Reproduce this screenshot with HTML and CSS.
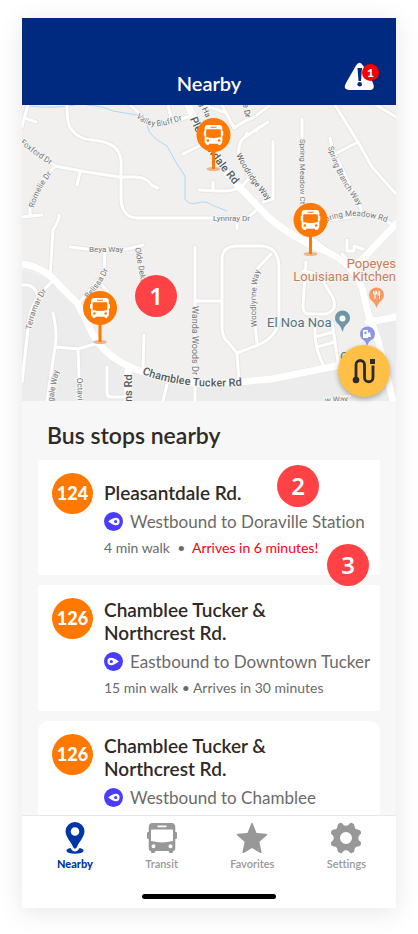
FILE: index.html
```html
<!DOCTYPE html>
<html lang="en">
<head>
<meta charset="utf-8">
<meta name="viewport" content="width=device-width, initial-scale=1">
<title>Nearby</title>
<link rel="stylesheet" href="styles.css">
</head>
<body>
<svg class="defs" aria-hidden="true">
  <symbol id="bus" viewBox="0 0 30 30">
    <path fill-rule="evenodd" d="M5 0H25Q28 .3 28.3 4V9H29Q30 9 30 10V15Q30 16 28.8 16H28.3V25Q28.3 28 26 28V29Q26 30 25 30H23Q22 30 21.500 28H8.500Q8 30 7 30H5Q4 30 4 29V28Q1.700 28 1.700 25V16H1.200Q0 16 0 15V10Q0 9 1 9H1.700V4Q2 .3 5 0ZM10.500 2.600V4.200H19.500V2.600ZM4 7.500V18Q15 20.800 26 18V7.500Q26 6.500 25 6.500H5Q4 6.500 4 7.500ZM6.500 21.200A2 2 0 1 0 6.500 25.200A2 2 0 1 0 6.500 21.200ZM23.500 21.200A2 2 0 1 0 23.500 25.200A2 2 0 1 0 23.500 21.200Z"/>
  </symbol>
  <symbol id="heading" viewBox="0 0 20 20">
    <circle cx="10" cy="10" r="10" fill="#4a3cff"/>
    <path fill="#fff" fill-rule="evenodd" d="M4.300 10Q9.500 6 12.500 6.100A3.900 3.900 0 0 1 12.500 13.900Q9.500 14 4.300 10ZM12.300 8.300A1.700 1.700 0 1 0 12.300 11.700A1.700 1.700 0 1 0 12.300 8.300Z"/>
  </symbol>
  <symbol id="pin" viewBox="0 0 36 54">
    <ellipse cx="18" cy="51" rx="7" ry="2" fill="#eab68c"/>
    <path d="M18 32V51" stroke="#ff7900" stroke-width="3"/>
    <circle cx="18" cy="17" r="17" fill="#ff7900"/>
    <use href="#bus" x="8" y="7" width="20" height="20" fill="#fff"/>
  </symbol>
</svg>

<div class="phone">
  <header class="topbar">
    <h1>Nearby</h1>
    <button class="alerts" aria-label="Alerts">
      <svg viewBox="0 0 31 30" aria-hidden="true">
        <path d="M12 4.500Q15.500-1 19 4.500L29 22Q31.500 28.500 26 29H5Q-1.500 28.500 2 22Z" fill="#fff"/>
        <path d="M13.500 7H18L17 20H14.500Z" fill="#002a7f"/><circle cx="15.700" cy="23.300" r="2.300" fill="#002a7f"/>
      </svg>
      <span class="badge">1</span>
    </button>
  </header>

  <section class="map" aria-label="Map">
    <svg class="canvas" viewBox="22 105 374 296">
      <defs>
        <path id="valley" d="M136 117Q147 127 159 126Q170 125 187 118"/>
        <path id="pleasant" d="M190 119Q200 145 236 187"/>
        <path id="foxford" d="M20 143Q34 155 52 166"/>
        <path id="romelie" d="M34 208Q38 190 55 170"/>
        <path id="woodridge" d="M236 155Q249 181 268 201"/>
        <path id="branch" d="M328 147Q335 176 358 205"/>
        <path id="meadow" d="M326 222Q354 209 391 224"/>
        <path id="terramar" d="M31 330Q36 304 49 288"/>
        <path id="belissa" d="M88 299Q101 286 108 270"/>
        <path id="woodlynne" d="M257 327Q253 286 262 266"/>
        <path id="tucker" d="M142 374Q186 391 250 385"/>
        <g id="roads">
          <path d="M28 105L24 119L22 127M25 118L36 122M67 105Q67 127 72 130Q78 139 92 140Q112 142 117 150Q122 156 121 168V199Q122 218 138 218H210M20 139L55 166L87 172L120 177H136Q148 178 151 185L158 188M80 172L77 185M55 166L40 184L30 207V216M22 217L42 215M59 215Q60 219 53 230L50 278M70 247L87 249H127L143 245M130 105L147 120Q155 126 165 124L188 117M168 105L172 121M183 154L201 145M199 190L220 191Q240 192 248 179M213 182V191M222 105L234 128Q247 119 253 118L270 105M204 105L224 112M268 122L245 137Q237 143 239 157M245 137L247 133M256 131L259 127M273 141V199L263 202M302 119V212M330 138L332 148L361 208V214M335 105L358 142L372 167L396 194M333 155L358 142M308 219Q345 222 362 213Q381 214 393 226M199 218H247L259 208M237 219V229M262 246H235Q223 247 222 258V329Q223 339 228 342L237 353L258 345Q279 336 279 317V266Q278 247 262 246M271 254L256 270Q252 300 257 343M237 353L239 382M195 247V401M195 301H222M22 285H27Q35 286 37 294M53 281Q31 300 29 320L22 382M53 313Q58 335 55 347L47 401M55 347L78 349L98 343M78 349L80 401M105 248L104 273L79 303M97 281L108 291M144 335L143 369M107 367V393Q107 397 112 397H127M168 380L163 401M306 262L303 306Q303 314 309 314H326Q338 310 333 298L323 281Q318 273 303 271M300 238L314 240L340 259M315 328Q314 349 325 368M332 322L338 362M315 337L333 332M317 347L335 342M342 254L353 265M347 240V251H354V246L363 249M376 105L396 117M332 399L350 396"/>
        </g>
        <g id="avenues">
          <path d="M188 105L198 127Q206 148 232 179L268 217Q292 238 325 251Q350 261 362 287L368 313L378 340L393 401M396 224L352 270M22 264Q45 267 60 286L77 303Q85 317 92 333Q105 357 135 369Q172 382 205 384L238 382L272 379L355 362M368 322L396 317M128 369V401"/>
        </g>
      </defs>
      <rect x="22" y="105" width="374" height="296" fill="#f1f0ef"/>
      <path d="M22 270L52 280L77 305L98 343L135 371L220 384L354 363L380 350L393 401H22ZM369 320L396 317V401Z" fill="#ececec"/>
      <g class="lines">
        <path class="water" d="M28 106Q55 109 75 105M87 105Q103 106 113 111L137 115Q146 120 148 128Q149 136 167 146L177 164L185 176V199Q188 205 198 203Q205 200 212 205L227 211"/>
        <use href="#roads" stroke="#e5e5e4" stroke-width="5"/>
        <use href="#avenues" stroke="#e7e7e6" stroke-width="8"/>
        <use href="#roads" stroke="#fff" stroke-width="3"/>
        <use href="#avenues" stroke="#fff" stroke-width="7"/>
      </g>
      <g class="street">
        <text><textPath href="#valley">Valley Bluff Dr</textPath></text>
        <text class="dark road"><textPath href="#pleasant">Pleasantdale Rd</textPath></text>
        <text><textPath href="#foxford">Foxford Dr</textPath></text>
        <text><textPath href="#romelie">Romelie Dr</textPath></text>
        <text class="dark"><textPath href="#woodridge">Woodridge Way</textPath></text>
        <text><textPath href="#branch">Spring Branch Way</textPath></text>
        <text><textPath href="#meadow">pring Meadow Rd</textPath></text>
        <text transform="translate(300 139) rotate(90)">Spring Meadow Ct</text>
        <text class="dark" transform="translate(199 103) rotate(65)">g Ha</text>
        <text class="dark" transform="translate(243 104) rotate(80)">e Dr</text>
        <text x="213" y="221">Lynnray Dr</text>
        <text x="89" y="252">Beya Way</text>
        <text><textPath href="#terramar">Terramar Dr</textPath></text>
        <text><textPath href="#belissa">Belissa Dr</textPath></text>
        <text transform="translate(135 248) rotate(80)">Olde Dekalb</text>
        <text class="wide" transform="translate(192 306) rotate(90)">Wanda Woods Dr</text>
        <text><textPath href="#woodlynne">Woodlynne Way</textPath></text>
        <text transform="translate(53 402) rotate(-80)">gale Way</text>
        <text transform="translate(77 378) rotate(88)">Octavia</text>
        <text class="dark road" transform="translate(132 402) rotate(-90)">ns Rd</text>
        <text class="dark road"><textPath href="#tucker">Chamblee Tucker Rd</textPath></text>
        <text transform="translate(325 403) rotate(-4)">w Way</text>
      </g>
      <g class="place">
        <text class="food" x="396" y="268" text-anchor="end">Popeyes</text>
        <text class="food" x="396" y="281" text-anchor="end">Louisiana Kitchen</text>
        <text class="venue" x="267" y="327">El Noa Noa</text>
        <text class="venue" x="340" y="361">C</text>
      </g>
      <path d="M342.500 332Q341 326 337 323A7.500 7.500 0 1 1 348 323Q344 326 342.500 332Z" fill="#7096a6"/><circle cx="342.500" cy="318.500" r="3" fill="#fff"/>
      <path d="M376.500 308Q375 303 371 300A7.500 7.500 0 1 1 382 300Q378 303 376.500 308Z" fill="#f89a67"/>
      <path d="M373.500 291V294H376.500V291M375 291V299M379.500 299V291Q377.500 292 378 295H379.500" fill="none" stroke="#fff"/>
      <path d="M367 347Q366 341 362 339A7.500 7.500 0 1 1 373 339Q368 341 367 347Z" fill="#8f96e0"/>
      <path fill="#fff" fill-rule="evenodd" d="M363 330H368V333L370 332 371 337H368V338H363ZM364.500 331.500V334H366.500V331.500Z"/>
      <use href="#pin" x="195.500" y="118" width="36" height="54"/>
      <use href="#pin" x="292.500" y="203" width="36" height="54"/>
      <use href="#pin" x="82" y="291" width="36" height="54"/>
    </svg>
    <span class="marker marker-map">1</span>
    <button class="routes" aria-label="Routes">
      <svg viewBox="0 0 52 52" aria-hidden="true">
        <path d="M18 34V19.750A4.250 4.250 0 0 1 26.500 19.750V32.500A4.250 4.250 0 0 0 35 32.500V20.500" fill="none" stroke="#2b2a26" stroke-width="2.800"/>
        <circle cx="18" cy="35" r="3.300" fill="#2b2a26"/><path d="M32 14H37V19H32Z" fill="#2b2a26"/>
      </svg>
    </button>
  </section>

  <main class="stops">
    <h2>Bus stops nearby</h2>
    <article class="card single">
      <span class="route">124</span>
      <div class="info">
        <h3>Pleasantdale Rd.</h3>
        <p class="direction"><svg aria-hidden="true"><use href="#heading"/></svg>Westbound to Doraville Station</p>
        <p class="time">4 min walk &nbsp;•&nbsp; <strong>Arrives in 6 minutes!</strong></p>
      </div>
      <span class="marker marker-stop">2</span>
      <span class="marker marker-time">3</span>
    </article>
    <article class="card">
      <span class="route">126</span>
      <div class="info">
        <h3>Chamblee Tucker &amp;<br>Northcrest Rd.</h3>
        <p class="direction east"><svg aria-hidden="true"><use href="#heading"/></svg>Eastbound to Downtown Tucker</p>
        <p class="time">15 min walk • Arrives in 30 minutes</p>
      </div>
    </article>
    <article class="card rounded">
      <span class="route">126</span>
      <div class="info">
        <h3>Chamblee Tucker &amp;<br>Northcrest Rd.</h3>
        <p class="direction"><svg aria-hidden="true"><use href="#heading"/></svg>Westbound to Chamblee</p>
      </div>
    </article>
  </main>

  <footer class="bottom">
    <nav>
      <a class="active" href="#nearby" aria-current="page">
        <svg viewBox="0 0 32 32" aria-hidden="true"><path fill-rule="evenodd" d="M16 0A9.500 9.500 0 0 1 25.500 9.500C25.500 15 18.500 22 18 25Q16 28.500 14 25C13.500 22 6.500 15 6.500 9.500A9.500 9.500 0 0 1 16 0ZM16 5.200A4.300 4.300 0 1 0 16 13.800A4.300 4.300 0 1 0 16 5.200Z"/><path d="M11.500 26Q13.500 29.500 16 29.500T20.500 26Q25 27 24.500 29Q23.500 31.800 16 31.800T7.500 29Q7 27 11.500 26Z"/></svg>
        <span>Nearby</span>
      </a>
      <a href="#transit">
        <svg viewBox="-1 -1 32 32" aria-hidden="true"><use href="#bus" width="30" height="30"/></svg>
        <span>Transit</span>
      </a>
      <a href="#favorites">
        <svg viewBox="0 0 32 32" aria-hidden="true"><path d="M15.200 1.500Q16 0 16.800 1.500L20.500 11L30.300 11.800Q32 12.200 30.600 13.400L23.300 20L25.600 30Q25.700 31.600 24.200 30.900L16 26L7.800 30.900Q6.300 31.600 6.400 30L8.700 20L1.400 13.400Q0 12.200 1.700 11.800L11.500 11Z"/></svg>
        <span>Favorites</span>
      </a>
      <a href="#settings">
        <svg viewBox="0 0 32 32" aria-hidden="true"><path fill-rule="evenodd" d="M10 1Q12 .2 13 2.500Q16 5 19 2.500Q20 .2 22 1Q24.500 1.500 24.500 4Q24.700 7.500 28 7.500Q30.500 7.500 31 10Q31.800 12 29.500 13Q27 16 29.500 19Q31.800 20 31 22Q30.500 24.500 28 24.500Q24.700 24.500 24.500 28Q24.500 30.500 22 31Q20 31.800 19 29.500Q16 27 13 29.500Q12 31.800 10 31Q7.500 30.500 7.500 28Q7.300 24.500 4 24.500Q1.500 24.500 1 22Q.2 20 2.500 19Q5 16 2.500 13Q.2 12 1 10Q1.500 7.500 4 7.500Q7.300 7.500 7.500 4Q7.500 1.500 10 1ZM16 10A6 6 0 1 0 16 22A6 6 0 1 0 16 10Z"/></svg>
        <span>Settings</span>
      </a>
    </nav>
    <div class="home"></div>
  </footer>
</div>
</body>
</html>
```

FILE: styles.css
```css
* { box-sizing: border-box; }
body {
  margin: 0;
  padding: 18px 22px 26px;
  height: 100vh;
  background: #fff;
  color: #2f2a27;
  font-family: Lato, "Liberation Sans", sans-serif;
  font-variant-ligatures: none;
}
h1, h2, h3, p { margin: 0; }
button { border: 0; padding: 0; cursor: pointer; }
svg { display: block; }
.defs { position: absolute; width: 0; height: 0; }

.phone {
  display: flex;
  flex-direction: column;
  height: 100%;
  background: #f7f7f7;
  box-shadow: 0 4px 24px rgba(0, 0, 0, 0.1);
}

.topbar {
  display: grid;
  grid-template-columns: 1fr auto 1fr;
  grid-template-rows: 35px;
  align-items: end;
  flex: none;
  padding: 43px 17px 9px;
  background: #002a7f;
  color: #fff;
}
.topbar h1 {
  grid-column: 2;
  font-size: 20px;
  line-height: 26px;
  font-weight: 600;
}
.alerts {
  position: relative;
  justify-self: end;
  align-self: start;
  width: 35px;
  height: 30px;
  background: none;
}
.alerts svg { width: 31px; height: 30px; }
.badge {
  position: absolute;
  top: 3px;
  right: 0;
  width: 17px;
  border-radius: 50%;
  background: #f60000;
  color: #fff;
  font: 900 12px/17px Lato, sans-serif;
  text-align: center;
}

.map { position: relative; flex: none; }
.canvas { width: 100%; height: auto; }
.lines { fill: none; stroke-linecap: round; stroke-linejoin: round; }
.water { stroke: #a9d8fb; stroke-width: 1; }
.street text, .place text {
  font-family: Roboto, sans-serif;
  paint-order: stroke;
  stroke: #f5f5f4;
  stroke-width: 2px;
}
.street text { font-size: 8px; fill: #74777a; }
.street .dark { fill: #555c61; }
.street .road { font-size: 11px; font-weight: 500; }
.street .wide { font-size: 9px; }
.place text { font-size: 13px; }
.place .food { fill: #c97d55; }
.place .venue { fill: #57737e; }

.routes {
  position: absolute;
  right: 6px;
  bottom: 4px;
  width: 52px;
  height: 52px;
  border-radius: 50%;
  background: #ffc045;
  box-shadow: 0 2px 5px rgba(0, 0, 0, 0.3);
}

.marker {
  position: absolute;
  z-index: 1;
  width: 42px;
  border-radius: 50%;
  background: #ff4245;
  color: #fff;
  font: 600 24px/42px "Noto Sans", sans-serif;
  text-align: center;
}
.marker-map { left: 113px; top: 170px; }
.marker-stop { right: 61px; top: 5px; }
.marker-time { right: 11px; top: 84px; }

.stops {
  flex: 1;
  min-height: 0;
  overflow: hidden;
  padding: 19px 16px 0;
}
.stops h2 {
  padding-left: 9px;
  margin-bottom: 10px;
  font-size: 23px;
  line-height: 30px;
  font-weight: 600;
}
.card {
  position: relative;
  display: flex;
  gap: 11px;
  margin-bottom: 10px;
  padding: 13px 14px 14px;
  border-radius: 2px;
  background: #fff;
}
.single { padding-bottom: 18px; }
.single .info { padding-top: 8px; }
.rounded { border-radius: 10px; }
.route {
  flex: none;
  width: 41px;
  height: 41px;
  border-radius: 50%;
  background: #ff7900;
  color: #fff;
  font-size: 18px;
  line-height: 41px;
  font-weight: 900;
  text-align: center;
}
.info h3 {
  font-size: 19px;
  line-height: 23px;
  font-weight: 600;
}
.direction {
  display: flex;
  align-items: center;
  gap: 7px;
  margin-top: 6px;
  color: #6c6a69;
  font-size: 17px;
  line-height: 23px;
  white-space: nowrap;
}
.direction svg { width: 19px; height: 19px; }
.east svg { transform: scaleX(-1); }
.time {
  margin-top: 5px;
  color: #6c6a69;
  font-size: 14px;
  line-height: 19px;
  white-space: nowrap;
}
.time strong { color: #fa0012; font-weight: 400; }

.bottom {
  flex: none;
  padding: 6px 0 9px;
  border-top: 1px solid #e8e8e8;
  background: #fff;
}
nav {
  display: flex;
  justify-content: space-between;
  padding: 0 30px 0 35px;
}
nav a {
  display: flex;
  flex-direction: column;
  align-items: center;
  gap: 3px;
  color: #989898;
  font-size: 11px;
  line-height: 14px;
  font-weight: 600;
  text-decoration: none;
}
nav svg { width: 32px; height: 32px; fill: currentColor; }
nav .active { color: #0036a8; font-weight: 900; }
.home {
  width: 134px;
  height: 5px;
  margin: 23px auto 0;
  border-radius: 3px;
  background: #000;
}
```
